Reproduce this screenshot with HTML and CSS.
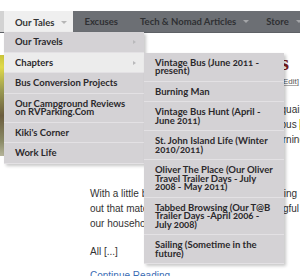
FILE: index.html
```html
<!DOCTYPE html>
<html>
<head>
<meta charset="utf-8">
<link rel="stylesheet" href="styles.css">
</head>
<body>
<div class="page">
  <nav class="nav">
    <div class="nav-edge"></div>
    <ul class="menu">
      <li class="item active">
        <a class="item-link">Our Tales<span class="down"></span></a>
        <ul class="sub">
          <li><a class="sub-link">Our Travels<span class="right"></span></a></li>
          <li class="has-sub open">
            <a class="sub-link">Chapters<span class="right"></span></a>
            <ul class="sub sub2">
              <li><a class="sub-link">Vintage Bus (June 2011 -<br>present)</a></li>
              <li><a class="sub-link">Burning Man</a></li>
              <li><a class="sub-link">Vintage Bus Hunt (April -<br>June 2011)</a></li>
              <li><a class="sub-link">St. John Island Life (Winter<br>2010/2011)</a></li>
              <li><a class="sub-link">Oliver The Place (Our Oliver<br>Travel Trailer Days - July<br>2008 - May 2011)</a></li>
              <li><a class="sub-link">Tabbed Browsing (Our T@B<br>Trailer Days -April 2006 -<br>July 2008)</a></li>
              <li><a class="sub-link">Sailing (Sometime in the<br>future)</a></li>
            </ul>
          </li>
          <li><a class="sub-link">Bus Conversion Projects</a></li>
          <li><a class="sub-link">Our Campground Reviews<br>on RVParking.Com</a></li>
          <li><a class="sub-link">Kiki's Corner</a></li>
          <li><a class="sub-link">Work Life</a></li>
        </ul>
      </li>
      <li class="item"><a class="item-link plain">Excuses</a></li>
      <li class="item"><a class="item-link">Tech &amp; Nomad Articles<span class="down"></span></a></li>
      <li class="item"><a class="item-link">Store<span class="down"></span></a></li>
    </ul>
  </nav>

  <main class="content">
    <div class="thumb"></div>
    <article class="post">
      <h2 class="title">Our Buses</h2>
      <div class="edit"><a class="edit-link">Edit</a>]</div>
      <div class="para">
        <div class="ln"><span>We have been living on the road</span><span>acquain</span></div>
        <div class="ln"><span>in our converted vintage</span><span>bus <mark class="hl">a</mark></span></div>
        <div class="ln"><span>since the beginning of the</span><span>morning</span></div>
        <div class="ln"><span>and the years that followed.</span></div>
      </div>
      <div class="para para2">
        <div class="ln end-a"><span>With a little bit of luck</span><span>going</span></div>
        <div class="ln end-b"><span>out that match</span><span>meaningful</span></div>
        <div class="ln"><span>our household</span></div>
      </div>
      <div class="para para3">
        <div class="ln"><span>All [...]</span></div>
      </div>
      <a class="more">Continue Reading &rarr;</a>
    </article>
  </main>
</div>
</body>
</html>
```

FILE: styles.css
```css
* { margin: 0; padding: 0; box-sizing: border-box; }
body {
  width: 300px;
  height: 276px;
  overflow: hidden;
  background: #fff;
  font-family: "Liberation Sans", Arial, sans-serif;
}
ul { list-style: none; }
a { text-decoration: none; }

.page { width: 300px; }

.nav {
  margin-top: 11px;
  height: 22px;
  display: flex;
  background: #6c6f74;
  border-bottom: 1px solid #5e6166;
  position: relative;
  z-index: 5;
}
.nav-edge { width: 4px; flex: none; background: #d3d3d3; }
.menu {
  display: flex;
  flex: none;
  height: 21px;
  font-family: Lato, "Open Sans", sans-serif;
  font-weight: bold;
  font-size: 9.5px;
}
.item { position: relative; flex: none; }
.item-link {
  display: flex;
  align-items: center;
  height: 21px;
  padding: 0 6px 0 11px;
  color: #2f3033;
  white-space: nowrap;
}
.item-link.plain { padding-right: 11px; }
.active > .item-link { background: #efefef; color: #333; height: 22px; }
.down {
  width: 0; height: 0;
  border-left: 3px solid transparent;
  border-right: 3px solid transparent;
  border-top: 3px solid #a3a5a8;
  margin-left: 7px;
}
.active .down { border-top-color: #b5b5b5; }

.sub {
  position: absolute;
  top: 100%;
  left: 0;
  width: 140px;
  background: #d4d2d5;
  box-shadow: 2px 2px 3px rgba(0, 0, 0, 0.22);
  font-family: Lato, "Open Sans", sans-serif;
  font-weight: bold;
  font-size: 9.5px;
  font-variant-numeric: oldstyle-nums;
}
.sub li { position: relative; }
.sub-link {
  display: flex;
  justify-content: space-between;
  align-items: center;
  padding: 6px 8px 5px 11px;
  line-height: 8.5px;
  border-bottom: 1px solid #e3e1e4;
  color: #2b292c;
  white-space: nowrap;
}
.open > .sub-link { background: #ececec; }
.right {
  width: 0; height: 0;
  border-left: 3px solid #b9b9bb;
  border-top: 2.5px solid transparent;
  border-bottom: 2.5px solid transparent;
}
.sub2 { top: 0; left: 100%; z-index: 2; }

.content { display: flex; }
.thumb {
  width: 82px;
  height: 101px;
  margin: 22px 8px 0 0;
  flex: none;
  background: linear-gradient(180deg, #c9c43a 0%, #e0da4a 12%, #9a9a52 35%, #6b5d3e 60%, #8a8a66 85%, #b5b49a 100%);
}
.post {
  width: 215px;
  flex: none;
  color: #333;
  font-size: 10px;
  line-height: 15px;
}
.title {
  margin-top: 19px;
  font-family: "Liberation Serif", serif;
  font-size: 22px;
  line-height: 22px;
  color: #7b1c1c;
  text-align: right;
  padding-right: 16px;
  white-space: nowrap;
}
.edit {
  margin-top: 3px;
  font-size: 8px;
  line-height: 10px;
  color: #555;
  text-align: right;
  padding-right: 6px;
}
.edit-link { color: #555; text-decoration: underline; text-decoration-color: #aaa; }
.para { margin-top: 14.5px; }
.para2 { margin-top: 24px; }
.para3 { margin-top: 13px; }
.ln {
  display: flex;
  justify-content: space-between;
  white-space: nowrap;
}
.ln.end-a { padding-right: 8px; }
.ln.end-b { padding-right: 6px; }
.hl { background: #f3e25a; color: #333; }
.more {
  display: block;
  margin-top: 9px;
  color: #3a6cb4;
}
```
